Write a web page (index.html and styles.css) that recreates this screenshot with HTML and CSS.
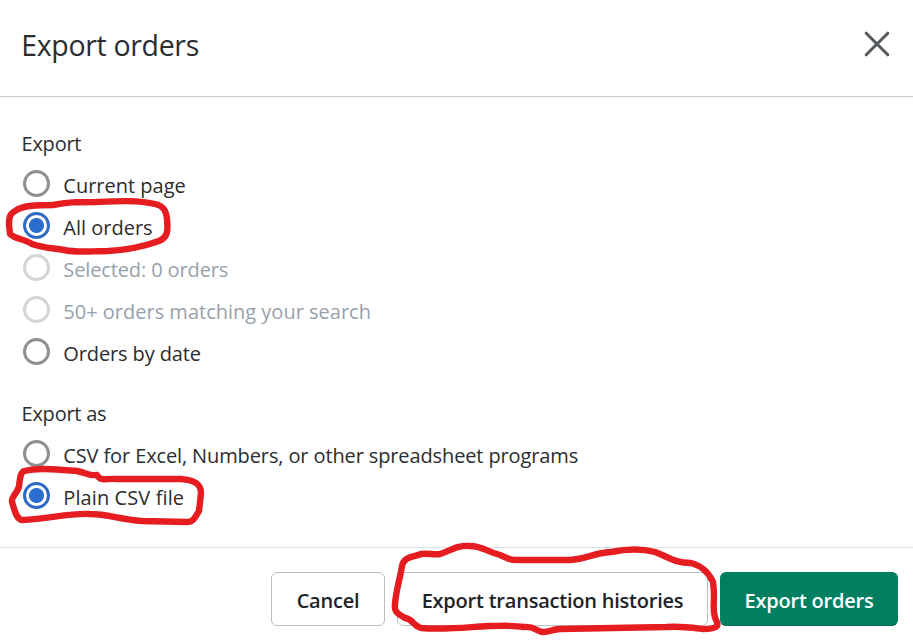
FILE: index.html
```
<!DOCTYPE html>
<html lang="en">
<head>
<meta charset="utf-8">
<title>Export orders</title>
<link rel="stylesheet" href="styles.css">
</head>
<body>
<main class="modal">
  <header class="modal-header">
    <h1 class="title">Export orders</h1>
    <button class="close" aria-label="Close">
      <svg width="26" height="26" viewBox="0 0 26 26"><path d="M2.2 2.2 23.8 23.8M23.8 2.2 2.2 23.8"/></svg>
    </button>
  </header>
  <section class="modal-body">
    <div class="group">
      <h2 class="legend">Export</h2>
      <div class="choice"><span class="radio"></span><span class="label">Current page</span></div>
      <div class="choice"><span class="radio checked"></span><span class="label">All orders</span></div>
      <div class="choice disabled"><span class="radio"></span><span class="label snug">Selected: 0 orders</span></div>
      <div class="choice disabled"><span class="radio"></span><span class="label">50+ orders matching your search</span></div>
      <div class="choice"><span class="radio"></span><span class="label snug">Orders by date</span></div>
    </div>
    <div class="group">
      <h2 class="legend">Export as</h2>
      <div class="choice"><span class="radio"></span><span class="label snug">CSV for Excel, Numbers, or other spreadsheet programs</span></div>
      <div class="choice"><span class="radio checked"></span><span class="label loose">Plain CSV file</span></div>
    </div>
  </section>
  <footer class="modal-footer">
    <button class="btn cancel">Cancel</button>
    <button class="btn histories">Export transaction histories</button>
    <button class="btn primary">Export orders</button>
  </footer>
  <svg class="marks" width="913" height="643" viewBox="0 0 913 643">
    <path d="M53 205C38 205 23 205 15 211C9 214 9 219 9 225L10 234C15 239 24 239 32 244C43 248 53 248 64 250C78 253 91 251 108 251C128 250 145 246 159 241C168 237 168 231 167 219C166 211 164 206 155 204C137 200 119 201 96 202C77 202 67 202 53 205Z"/>
    <path d="M24 471C40 467 57 470 77 471C87 473 89 476 97 475C101 482 105 478 118 479H181C195 480 201 484 201 493L199 511C195 517 194 522 187 522L142 521C118 519 108 514 90 514C67 513 50 519 22 520C16 519 15 511 12 502C11 496 18 493 19 486C20 479 20 473 24 471Z"/>
    <path d="M440 554C452 550 457 545 470 546C482 546 488 552 500 555C512 560 508 560 522 560H570C587 559 593 553 611 552C626 549 640 548 655 552C669 557 674 563 691 563C702 566 709 573 713 582C716 602 711 609 716 620C720 627 715 629 703 629C687 627 681 626 666 627L560 629C549 630 550 632 544 632C536 632 536 626 524 627C512 625 502 626 488 626C468 627 446 630 421 628C412 625 413 619 405 618C397 613 394 612 395 604C396 590 400 579 402 566C404 556 414 557 421 554C428 553 434 555 440 554Z"/>
  </svg>
</main>
</body>
</html>
```
FILE: styles.css
```
* { box-sizing: border-box; }
body { margin: 0; background: #fff; font-family: "Open Sans", "Noto Sans", sans-serif; color: #2b2d2f; }
.modal { position: relative; width: 913px; height: 643px; display: flex; flex-direction: column; overflow: hidden; background: #fff; }
.modal-header { height: 97px; flex: none; border-bottom: 1px solid #c9cbcd; display: flex; justify-content: space-between; align-items: flex-start; padding: 25px 23px 0 21.3px; }
.title { margin: 0; font-size: 28.5px; line-height: 41px; font-weight: 400; letter-spacing: -0.34px; white-space: nowrap; }
.close { width: 26px; height: 26px; margin-top: 6px; padding: 0; border: 0; background: none; }
.close svg { display: block; fill: none; stroke: #55585b; stroke-width: 3; stroke-linecap: round; }
.modal-body { flex: 1; padding: 25px 22px 0; display: flex; flex-direction: column; gap: 18px; }
.legend { margin: 0 0 0 -0.5px; height: 42px; font-size: 20px; line-height: 44px; font-weight: 400; letter-spacing: -0.23px; }
.choice { height: 42px; padding-left: 1px; display: flex; align-items: flex-start; gap: 13.3px; }
.radio { width: 27px; height: 27px; flex: none; margin-top: 6px; border: 3px solid #8c9093; border-radius: 50%; background: #fff; }
.radio.checked { border-color: #2f6bc4; background: radial-gradient(circle, #2b6ccf 7px, #fff 8px); }
.label { font-size: 20px; line-height: 44px; white-space: nowrap; }
.snug { letter-spacing: -0.12px; }
.loose { letter-spacing: 0.1px; }
.disabled { color: #97a1ab; }
.disabled .radio { border-color: #d3d5d6; }
.modal-footer { height: 96px; flex: none; border-top: 1px solid #dfe2e5; padding: 24px 15px 0 0; display: flex; justify-content: flex-end; gap: 12px; }
.btn { height: 54px; padding: 3px 0 0; border: 1px solid #bcbfc2; border-radius: 6px; background: #fff; color: #212427; font: 600 20px/28px "Open Sans", sans-serif; letter-spacing: -0.22px; white-space: nowrap; }
.cancel { width: 114px; }
.histories { width: 311px; }
.primary { width: 178px; border-color: #008060; border-bottom-color: #00694f; background: #008060; color: #fff; }
.marks { position: absolute; inset: 0; pointer-events: none; fill: none; stroke: #e51c20; stroke-width: 6.4; stroke-linejoin: round; stroke-linecap: round; }
```
